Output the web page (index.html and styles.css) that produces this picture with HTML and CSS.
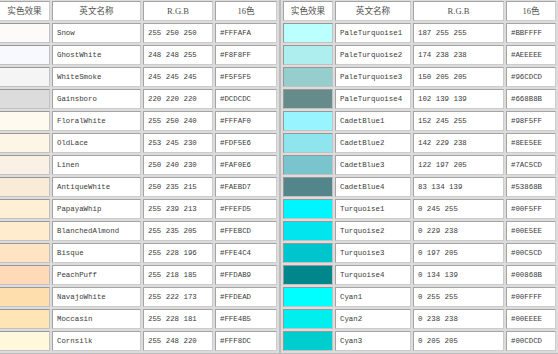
FILE: index.html
```html
<!DOCTYPE html>
<html lang="zh">
<head>
<meta charset="utf-8">
<title>颜色对照表</title>
<link rel="stylesheet" href="styles.css">
</head>
<body>
<div class="page">
  <table class="tbl tbl-left">
    <thead>
      <tr><th class="c-sw">实色效果</th><th class="c-name">英文名称</th><th class="c-rgb">R.G.B</th><th class="c-hex">16色</th></tr>
    </thead>
    <tbody>
      <tr><td class="sw" style="background:#FFFAFA"></td><td>Snow</td><td>255 250 250</td><td>#FFFAFA</td></tr>
      <tr><td class="sw" style="background:#F8F8FF"></td><td>GhostWhite</td><td>248 248 255</td><td>#F8F8FF</td></tr>
      <tr><td class="sw" style="background:#F5F5F5"></td><td>WhiteSmoke</td><td>245 245 245</td><td>#F5F5F5</td></tr>
      <tr><td class="sw" style="background:#DCDCDC"></td><td>Gainsboro</td><td>220 220 220</td><td>#DCDCDC</td></tr>
      <tr><td class="sw" style="background:#FFFAF0"></td><td>FloralWhite</td><td>255 250 240</td><td>#FFFAF0</td></tr>
      <tr><td class="sw" style="background:#FDF5E6"></td><td>OldLace</td><td>253 245 230</td><td>#FDF5E6</td></tr>
      <tr><td class="sw" style="background:#FAF0E6"></td><td>Linen</td><td>250 240 230</td><td>#FAF0E6</td></tr>
      <tr><td class="sw" style="background:#FAEBD7"></td><td>AntiqueWhite</td><td>250 235 215</td><td>#FAEBD7</td></tr>
      <tr><td class="sw" style="background:#FFEFD5"></td><td>PapayaWhip</td><td>255 239 213</td><td>#FFEFD5</td></tr>
      <tr><td class="sw" style="background:#FFEBCD"></td><td>BlanchedAlmond</td><td>255 235 205</td><td>#FFEBCD</td></tr>
      <tr><td class="sw" style="background:#FFE4C4"></td><td>Bisque</td><td>255 228 196</td><td>#FFE4C4</td></tr>
      <tr><td class="sw" style="background:#FFDAB9"></td><td>PeachPuff</td><td>255 218 185</td><td>#FFDAB9</td></tr>
      <tr><td class="sw" style="background:#FFDEAD"></td><td>NavajoWhite</td><td>255 222 173</td><td>#FFDEAD</td></tr>
      <tr><td class="sw" style="background:#FFE4B5"></td><td>Moccasin</td><td>255 228 181</td><td>#FFE4B5</td></tr>
      <tr><td class="sw" style="background:#FFF8DC"></td><td>Cornsilk</td><td>255 248 220</td><td>#FFF8DC</td></tr>
    </tbody>
  </table>
  <table class="tbl tbl-right">
    <thead>
      <tr><th class="c-sw">实色效果</th><th class="c-name">英文名称</th><th class="c-rgb">R.G.B</th><th class="c-hex">16色</th></tr>
    </thead>
    <tbody>
      <tr><td class="sw" style="background:#BBFFFF"></td><td>PaleTurquoise1</td><td>187 255 255</td><td>#BBFFFF</td></tr>
      <tr><td class="sw" style="background:#AEEEEE"></td><td>PaleTurquoise2</td><td>174 238 238</td><td>#AEEEEE</td></tr>
      <tr><td class="sw" style="background:#96CDCD"></td><td>PaleTurquoise3</td><td>150 205 205</td><td>#96CDCD</td></tr>
      <tr><td class="sw" style="background:#668B8B"></td><td>PaleTurquoise4</td><td>102 139 139</td><td>#668B8B</td></tr>
      <tr><td class="sw" style="background:#98F5FF"></td><td>CadetBlue1</td><td>152 245 255</td><td>#98F5FF</td></tr>
      <tr><td class="sw" style="background:#8EE5EE"></td><td>CadetBlue2</td><td>142 229 238</td><td>#8EE5EE</td></tr>
      <tr><td class="sw" style="background:#7AC5CD"></td><td>CadetBlue3</td><td>122 197 205</td><td>#7AC5CD</td></tr>
      <tr><td class="sw" style="background:#53868B"></td><td>CadetBlue4</td><td>83 134 139</td><td>#53868B</td></tr>
      <tr><td class="sw" style="background:#00F5FF"></td><td>Turquoise1</td><td>0 245 255</td><td>#00F5FF</td></tr>
      <tr><td class="sw" style="background:#00E5EE"></td><td>Turquoise2</td><td>0 229 238</td><td>#00E5EE</td></tr>
      <tr><td class="sw" style="background:#00C5CD"></td><td>Turquoise3</td><td>0 197 205</td><td>#00C5CD</td></tr>
      <tr><td class="sw" style="background:#00868B"></td><td>Turquoise4</td><td>0 134 139</td><td>#00868B</td></tr>
      <tr><td class="sw" style="background:#00FFFF"></td><td>Cyan1</td><td>0 255 255</td><td>#00FFFF</td></tr>
      <tr><td class="sw" style="background:#00EEEE"></td><td>Cyan2</td><td>0 238 238</td><td>#00EEEE</td></tr>
      <tr><td class="sw" style="background:#00CDCD"></td><td>Cyan3</td><td>0 205 205</td><td>#00CDCD</td></tr>
    </tbody>
  </table>
</div>
</body>
</html>
```

FILE: styles.css
```css
html, body {
  margin: 0;
  padding: 0;
  background: #ffffff;
  overflow: hidden;
}

.page {
  display: flex;
  align-items: flex-start;
  margin: -2px 0 0 -4px;
  width: 570px;
}

.tbl {
  flex: none;
  border-collapse: separate;
  border-spacing: 2px;
  border: 1px solid #bcbcbc;
  background: #dcdcdc;
  table-layout: fixed;
}

.tbl th,
.tbl td {
  box-sizing: border-box;
  height: 20px;
  padding: 0 4px;
  background: #ffffff;
  border: 1px solid;
  border-color: #a4a4a4 #cccccc #cccccc #a4a4a4;
  color: #3a3a3a;
  white-space: nowrap;
  overflow: hidden;
  vertical-align: middle;
  line-height: 18px;
}

.tbl th {
  font-family: "Liberation Serif", "Noto Sans CJK SC", serif;
  font-weight: normal;
  font-size: 8.6px;
  text-align: center;
  color: #505050;
}

.tbl td {
  font-family: "Liberation Mono", monospace;
  font-size: 7.4px;
  text-align: left;
}

.tbl td.sw {
  border-color: #979797 #c2c2c2 #c2c2c2 #979797;
}

.tbl-left .c-sw { width: 51px; }
.tbl-left .c-name { width: 89px; }
.tbl-left .c-rgb { width: 70px; }
.tbl-left .c-hex { width: 62px; }

.tbl-right .c-sw { width: 50px; }
.tbl-right .c-name { width: 76px; }
.tbl-right .c-rgb { width: 91px; }
.tbl-right .c-hex { width: 50px; }
```
